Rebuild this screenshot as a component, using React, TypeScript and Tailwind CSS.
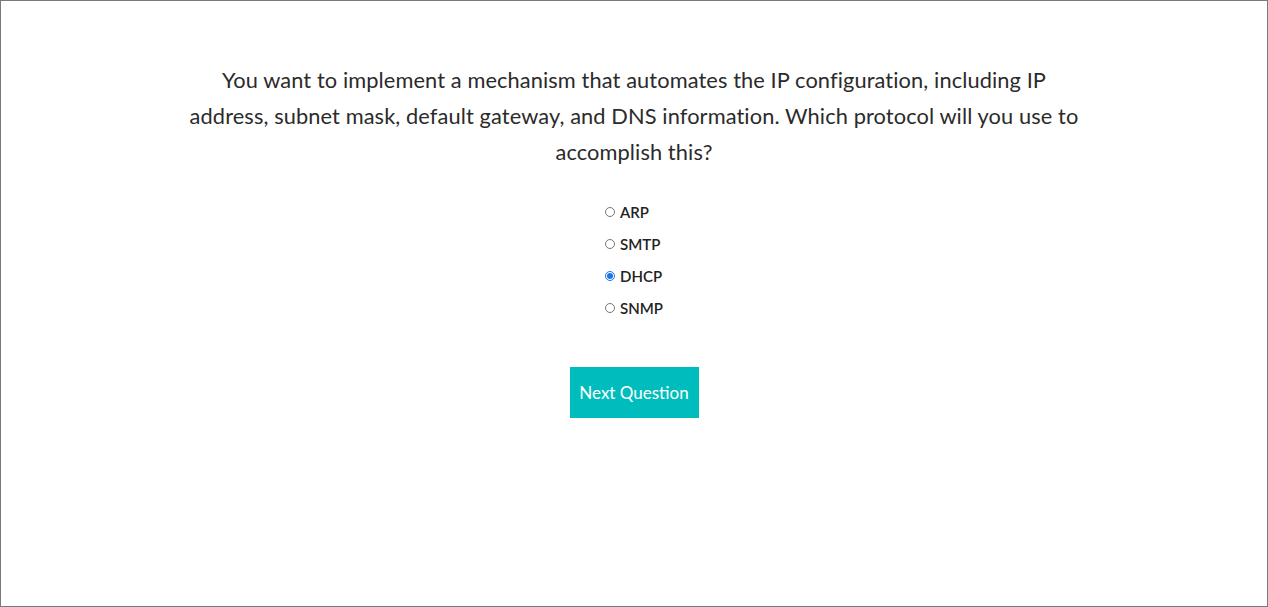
import React, { useState } from 'react';

const options = ['ARP', 'SMTP', 'DHCP', 'SNMP'];

export default function App() {
  const [selected, setSelected] = useState('DHCP');

  return (
    <div
      className="h-[607px] w-full border border-[#7a7a7a] bg-white text-[#333333]"
      style={{ fontFamily: 'Lato, "Noto Sans", sans-serif' }}
    >
      <div className="flex flex-col items-center pt-[61px]">
        <p className="w-[1000px] text-center text-[21.8px] leading-[36px] tracking-[0.1px] text-[#2b2b2b]">
          You want to implement a mechanism that automates the IP configuration, including IP
          <br />
          address, subnet mask, default gateway, and DNS information. Which protocol will you use to
          <br />
          accomplish this?
        </p>

        <div className="mt-[33px] flex flex-col gap-[14px]">
          {options.map((opt) => (
            <label key={opt} className="flex h-[18px] cursor-pointer items-center text-[15px] font-semibold text-[#222]">
              <input
                type="radio"
                name="q"
                checked={selected === opt}
                onChange={() => setSelected(opt)}
                className="m-0 mr-[5px] h-[10px] w-[10px] accent-[#1a73e8]"
              />
              {opt}
            </label>
          ))}
        </div>

        <button className="mt-[50px] h-[51px] w-[129px] bg-[#00bdbd] text-[17px] text-white">
          Next Question
        </button>
      </div>
    </div>
  );
}
